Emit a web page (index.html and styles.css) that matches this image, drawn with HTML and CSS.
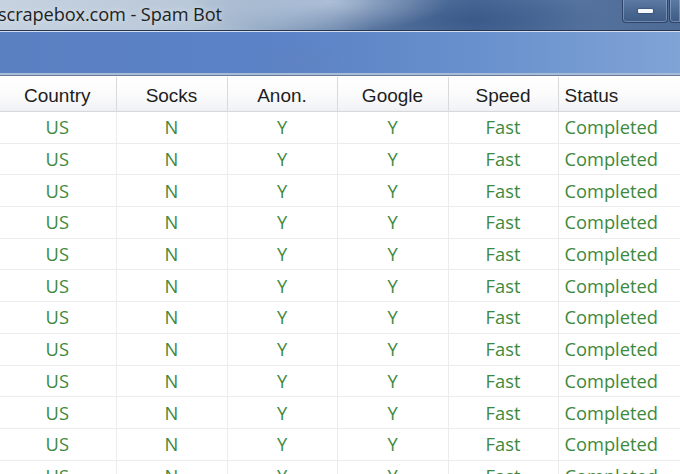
FILE: index.html
```html
<!DOCTYPE html>
<html>
<head>
<meta charset="utf-8">
<link rel="stylesheet" href="styles.css">
</head>
<body>
<div class="window">
  <div class="titlebar">
    <span class="title">scrapebox.com - Spam Bot</span>
    <div class="controls">
      <div class="btn min"><span class="dash"></span></div>
      <div class="btn max"></div>
    </div>
  </div>
  <div class="menuband"></div>
  <table class="grid">
    <colgroup>
      <col class="c1"><col class="c2"><col class="c3"><col class="c4"><col class="c5"><col class="c6">
    </colgroup>
    <thead>
      <tr><th>Country</th><th>Socks</th><th>Anon.</th><th>Google</th><th>Speed</th><th class="left">Status</th></tr>
    </thead>
    <tbody>
      <tr><td>US</td><td>N</td><td>Y</td><td>Y</td><td>Fast</td><td class="left">Completed</td></tr>
      <tr><td>US</td><td>N</td><td>Y</td><td>Y</td><td>Fast</td><td class="left">Completed</td></tr>
      <tr><td>US</td><td>N</td><td>Y</td><td>Y</td><td>Fast</td><td class="left">Completed</td></tr>
      <tr><td>US</td><td>N</td><td>Y</td><td>Y</td><td>Fast</td><td class="left">Completed</td></tr>
      <tr><td>US</td><td>N</td><td>Y</td><td>Y</td><td>Fast</td><td class="left">Completed</td></tr>
      <tr><td>US</td><td>N</td><td>Y</td><td>Y</td><td>Fast</td><td class="left">Completed</td></tr>
      <tr><td>US</td><td>N</td><td>Y</td><td>Y</td><td>Fast</td><td class="left">Completed</td></tr>
      <tr><td>US</td><td>N</td><td>Y</td><td>Y</td><td>Fast</td><td class="left">Completed</td></tr>
      <tr><td>US</td><td>N</td><td>Y</td><td>Y</td><td>Fast</td><td class="left">Completed</td></tr>
      <tr><td>US</td><td>N</td><td>Y</td><td>Y</td><td>Fast</td><td class="left">Completed</td></tr>
      <tr><td>US</td><td>N</td><td>Y</td><td>Y</td><td>Fast</td><td class="left">Completed</td></tr>
      <tr><td>US</td><td>N</td><td>Y</td><td>Y</td><td>Fast</td><td class="left">Completed</td></tr>
    </tbody>
  </table>
</div>
</body>
</html>
```

FILE: styles.css
```css
html, body {
  margin: 0;
  padding: 0;
  background: #ffffff;
  overflow: hidden;
}
.window {
  width: 680px;
  height: 474px;
  overflow: hidden;
  display: flex;
  flex-direction: column;
}
.titlebar {
  height: 30px;
  flex: none;
  display: flex;
  align-items: flex-start;
  justify-content: space-between;
  background:
    radial-gradient(ellipse 120px 30px at 330px 2px, rgba(220,230,245,0.55), rgba(220,230,245,0) 100%),
    radial-gradient(ellipse 140px 28px at 470px 20px, rgba(40,70,120,0.45), rgba(40,70,120,0) 100%),
    linear-gradient(90deg, #c6d2df 0%, #b9c8d9 28%, #8ea5c2 42%, #5d7aa3 55%, #4a6a98 70%, #56739f 85%, #4d6a95 100%);
  border-bottom: 1px solid #233552;
}
.title {
  font-family: "Open Sans", "Noto Sans", sans-serif;
  font-size: 18.2px;
  color: #1c1f24;
  margin-left: -2px;
  margin-top: 1px;
  line-height: 26px;
  letter-spacing: -0.1px;
  text-shadow: 0 0 6px rgba(255,255,255,0.6);
}
.controls {
  display: flex;
  margin-top: -1px;
}
.btn {
  height: 23px;
  border: 1px solid #2f4468;
  border-top: none;
  border-radius: 0 0 4px 4px;
  box-shadow: inset 0 0 0 1px rgba(200,215,235,0.35);
  background: linear-gradient(180deg, #5d7ba5 0%, #49668f 60%, #3f5c86 100%);
}
.min {
  width: 44px;
  display: flex;
  align-items: center;
  justify-content: center;
  margin-right: 1px;
}
.dash {
  width: 15px;
  height: 4px;
  margin-top: 1px;
  background: #f6f8fb;
  border-radius: 1px;
  box-shadow: 0 0 2px rgba(20,30,50,0.8);
}
.max {
  width: 10px;
  border-right: none;
  border-radius: 0 0 0 4px;
}
.menuband {
  height: 41px;
  flex: none;
  border-top: 1px solid #d3dded;
  border-bottom: 2px solid #a9bcd8;
  background:
    radial-gradient(ellipse 60px 25px at 300px 30px, rgba(100,130,190,0.4), rgba(100,130,190,0) 100%),
    linear-gradient(90deg, #5b80c2 0%, #5a82c6 40%, #6890cc 70%, #80a3d6 100%);
  box-shadow: 0 1px 0 #6b7c98;
  margin-bottom: 2px;
}
.grid {
  border-collapse: collapse;
  table-layout: fixed;
  width: 681px;
  margin-left: -1px;
  font-family: "Open Sans", "Noto Sans", sans-serif;
}
.c1 { width: 117px; }
.c2 { width: 111px; }
.c3 { width: 110px; }
.c4 { width: 111px; }
.c5 { width: 110px; }
.c6 { width: 122px; }
.grid th {
  height: 31px;
  padding: 3px 0 0 0;
  font-family: "Liberation Sans", Arial, sans-serif;
  font-weight: normal;
  font-size: 19px;
  color: #1e1e1e;
  text-align: center;
  background: linear-gradient(180deg, #ffffff 0%, #fbfbfc 50%, #f1f2f4 100%);
  border-right: 1px solid #d8dadd;
  border-bottom: 1px solid #d6d8db;
  box-shadow: inset 0 -1px 0 #eceef0;
}
.grid td {
  height: 30.7px;
  padding: 0;
  font-size: 18.3px;
  color: #3d893d;
  text-align: center;
  border-right: 1px solid #ececec;
  border-bottom: 1px solid #ececec;
  line-height: 30px;
}
.grid .left {
  text-align: left;
  padding-left: 6px;
}
```
